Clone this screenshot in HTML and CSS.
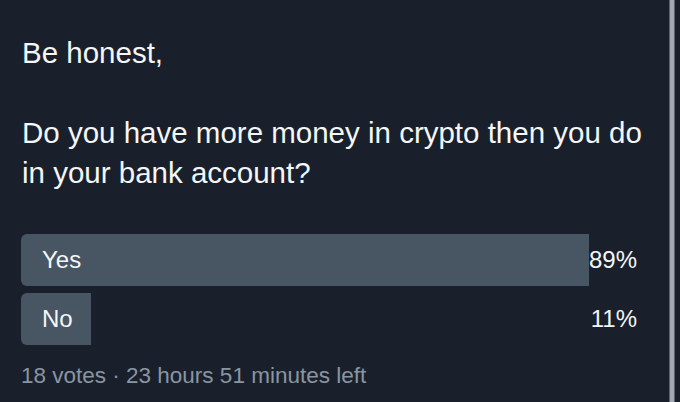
FILE: index.html
```html
<!DOCTYPE html>
<html lang="en">
<head>
<meta charset="utf-8">
<title>Poll</title>
<link rel="stylesheet" href="styles.css">
</head>
<body>
<div class="page">
  <main class="tweet">
    <p class="text">Be honest,</p>
    <p class="text question">Do you have more money in crypto then you do in your bank account?</p>
    <div class="poll">
      <div class="option">
        <div class="bar" style="width: 89%"></div>
        <span class="label">Yes</span>
        <span class="pct">89%</span>
      </div>
      <div class="option">
        <div class="bar" style="width: 11%"></div>
        <span class="label">No</span>
        <span class="pct">11%</span>
      </div>
    </div>
    <p class="meta">18 votes · 23 hours 51 minutes left</p>
  </main>
  <div class="divider"></div>
  <div class="edge"></div>
</div>
</body>
</html>
```

FILE: styles.css
```css
html, body {
  margin: 0;
  padding: 0;
  background: #19202b;
}
body {
  width: 680px;
  height: 402px;
  overflow: hidden;
  font-family: "Liberation Sans", Arial, sans-serif;
  color: #f4f6f8;
}
.page {
  display: flex;
  height: 402px;
}
.tweet {
  width: 638px;
  padding: 33px 10px 0 21px;
  flex: none;
}
.divider {
  width: 6px;
  flex: none;
  background: linear-gradient(to right, #5d6370 0, #5d6370 1px, #a3a8b2 1px, #a3a8b2 5px, #5d6370 5px);
}
.edge {
  flex: 1;
}
.text {
  margin: 0;
  font-size: 29.5px;
  line-height: 40px;
  padding-left: 1px;
}
.question {
  margin-top: 40px;
}
.poll {
  margin-top: 41px;
  display: flex;
  flex-direction: column;
  gap: 7px;
}
.option {
  display: grid;
  grid-template-columns: 1fr auto;
  align-items: center;
  height: 52px;
  font-size: 24px;
}
.bar {
  grid-row: 1;
  grid-column: 1 / 3;
  height: 52px;
  background: #485563;
  border-radius: 6px 0 0 6px;
}
.label {
  grid-row: 1;
  grid-column: 1;
  padding-left: 21px;
  color: #f4f6f8;
}
.pct {
  grid-row: 1;
  grid-column: 2;
  padding-right: 22px;
  color: #f4f6f8;
}
.meta {
  margin: 16px 0 0;
  font-size: 22.5px;
  line-height: 30px;
  color: #8a95a2;
}
```
